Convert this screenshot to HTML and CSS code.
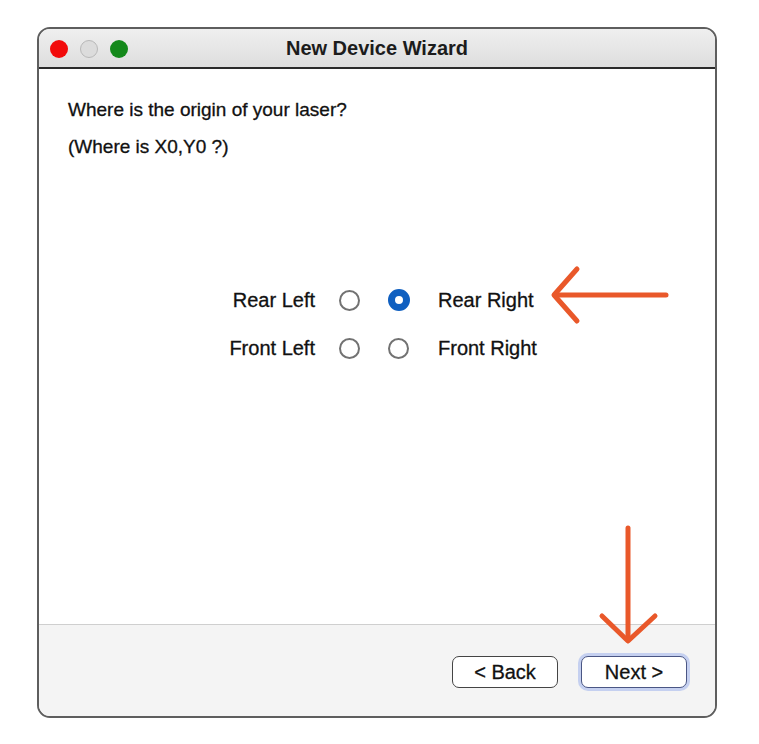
FILE: index.html
```html
<!DOCTYPE html>
<html lang="en">
<head>
<meta charset="utf-8">
<title>New Device Wizard</title>
<link rel="stylesheet" href="styles.css">
</head>
<body>
<div class="window">
  <div class="titlebar">
    <div class="lights">
      <span class="light red"></span>
      <span class="light gray"></span>
      <span class="light green"></span>
    </div>
    <div class="title">New Device Wizard</div>
    <div class="spacer"></div>
  </div>
  <div class="content">
    <p class="line">Where is the origin of your laser?</p>
    <p class="line second">(Where is X0,Y0 ?)</p>
    <div class="origins">
      <span class="lbl left">Rear Left</span>
      <span class="cell"><span class="radio"></span></span>
      <span class="cell"><span class="radio checked"></span></span>
      <span class="lbl right">Rear Right</span>
      <span class="lbl left">Front Left</span>
      <span class="cell"><span class="radio"></span></span>
      <span class="cell"><span class="radio"></span></span>
      <span class="lbl right">Front Right</span>
    </div>
  </div>
  <div class="footer">
    <button class="btn">&lt; Back</button>
    <button class="btn primary">Next &gt;</button>
  </div>
</div>
<svg class="annotations" width="759" height="744" viewBox="0 0 759 744">
  <g fill="none" stroke="#e9582a" stroke-width="5" stroke-linecap="round" stroke-linejoin="round">
    <path d="M556 295 H666"/>
    <path d="M577 269 L554 295 L577 321"/>
    <path d="M628 528 V639"/>
    <path d="M602 616 L628 641 L655 616"/>
  </g>
</svg>
</body>
</html>
```

FILE: styles.css
```css
* { box-sizing: border-box; }

body {
  margin: 0;
  background: #ffffff;
  font-family: "Liberation Sans", Arial, sans-serif;
  color: #111;
  width: 759px;
  height: 744px;
  position: relative;
  overflow: hidden;
}

.window {
  margin: 27px 0 0 37px;
  width: 680px;
  height: 691px;
  border: 2px solid #5e5e5e;
  border-radius: 13px;
  overflow: hidden;
  display: flex;
  flex-direction: column;
  background: #fff;
}

.titlebar {
  height: 40px;
  flex: none;
  background: linear-gradient(#efefef, #dedede);
  border-bottom: 2px solid #2b2b2b;
  display: grid;
  grid-template-columns: 1fr auto 1fr;
  align-items: center;
}

.lights {
  display: flex;
  gap: 12px;
  padding-left: 11px;
  padding-top: 1px;
}

.light {
  width: 18px;
  height: 18px;
  border-radius: 50%;
  display: block;
}
.light.red { background: #f20b0b; }
.light.gray { background: #dcdcdc; border: 1.5px solid #b8b8b8; }
.light.green { background: #14891b; }

.title {
  font-size: 20px;
  font-weight: bold;
  color: #1c1c1c;
  padding-top: 1px;
}

.content {
  flex: 1;
  padding: 29px 0 0 29px;
  background: #fff;
}

.line {
  margin: 0;
  font-size: 19px;
  line-height: 24px;
  color: #111;
  -webkit-text-stroke: 0.3px #111;
}
.line.second { margin-top: 13px; }

.origins {
  margin: 129px 0 0 132px;
  display: grid;
  grid-template-columns: 115px 45px 49px auto;
  row-gap: 24px;
  align-items: center;
}

.lbl {
  font-size: 20px;
  line-height: 24px;
  color: #111;
  -webkit-text-stroke: 0.3px #111;
}
.lbl.left { text-align: right; }
.lbl.right { padding-left: 29px; }

.cell {
  display: flex;
  justify-content: flex-end;
}

.radio {
  display: block;
  width: 21px;
  height: 21px;
  border-radius: 50%;
  border: 2px solid #727272;
  background: #fff;
}
.radio.checked {
  width: 22px;
  height: 22px;
  border: 7px solid #0f5fc0;
  margin-right: -1px;
}

.footer {
  flex: none;
  height: 92px;
  border-top: 1px solid #cfcfcf;
  background: #f4f4f4;
  display: flex;
  justify-content: flex-end;
  align-items: flex-start;
  gap: 23px;
  padding: 31px 28px 0 0;
}

.btn {
  width: 106px;
  height: 32px;
  border: 1.5px solid #444;
  border-radius: 7px;
  background: #fff;
  font-family: "Liberation Sans", Arial, sans-serif;
  font-size: 20px;
  color: #111;
  -webkit-text-stroke: 0.3px #111;
  padding: 0;
  line-height: 28px;
}
.btn.primary {
  border-color: #4a5684;
  box-shadow: 0 0 0 3px rgba(140, 165, 235, 0.45);
}

.annotations {
  position: absolute;
  left: 0;
  top: 0;
  pointer-events: none;
}
```
